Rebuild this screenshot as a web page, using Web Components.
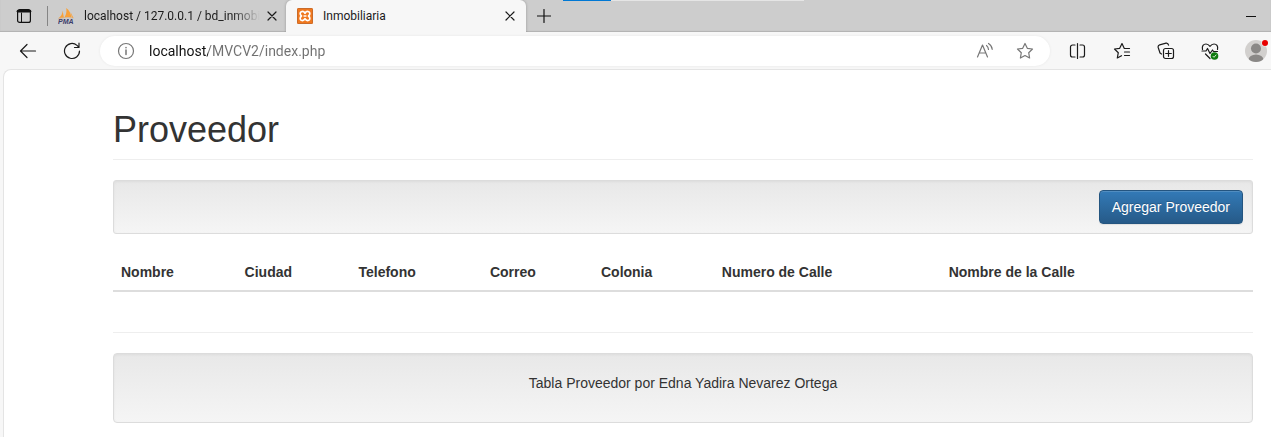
<!DOCTYPE html>
<html lang="es">
<head>
<meta charset="utf-8">
<title>Inmobiliaria</title>
<style>
html, body { margin: 0; height: 100%; }
body { background: #f7f7f7; color: #333; font: 14px/20px "Liberation Sans", Arial, sans-serif; overflow: hidden; }
</style>
</head>
<body>
<browser-window></browser-window>

<script>
const define = (name, html) => {
  const template = document.createElement('template');
  template.innerHTML = html;
  customElements.define(name, class extends HTMLElement {
    constructor() {
      super();
      this.attachShadow({ mode: 'open' }).append(template.content.cloneNode(true));
    }
  });
};

const iconButton = `
  button { appearance: none; border: 0; background: none; padding: 0; margin: 0; color: inherit; display: flex; align-items: center; justify-content: center; flex: none; box-sizing: border-box; }
  button svg { display: block; fill: none; stroke: currentColor; stroke-width: 1.2; stroke-linecap: round; stroke-linejoin: round; }
`;

define('browser-tab', `
<style>
  ${iconButton}
  :host { display: flex; align-items: center; box-sizing: border-box; height: 32px; width: 238px; padding: 0 6px 0 10px; color: #1b1b1b; }
  :host([selected]) { width: 240px; padding: 0 8px 0 11px; background: #f7f7f7; border-radius: 6px 6px 0 0; box-shadow: 0 0 3px #0004; clip-path: inset(0 -4px 0 -4px); }
  .icon { width: 16px; height: 16px; margin-right: 10px; flex: none; }
  .title { flex: 1; min-width: 0; overflow: hidden; white-space: nowrap; font: 12px/20px Roboto, "Open Sans", sans-serif; }
  :host(:not([selected])) .title { mask-image: linear-gradient(to right, #000 calc(100% - 28px), transparent); }
  button { width: 16px; height: 16px; margin-left: 4px; }
</style>
<span class="icon"><slot name="icon"></slot></span>
<span class="title"><slot></slot></span>
<button aria-label="Cerrar pestaña"><svg width="10" height="10"><path d="M1 1l8 8M9 1L1 9"/></svg></button>
`);

define('tab-strip', `
<style>
  ${iconButton}
  :host { display: flex; height: 32px; background: #cdcdcd; color: #111; box-shadow: inset 0 -1px 1px #0002; }
  .menu { width: 47px; height: 32px; }
  .rule { width: 1px; height: 20px; margin-top: 6px; background: #858585; }
  .add { width: 37px; height: 32px; padding-right: 2px; }
  .progress { width: 241px; height: 1px; background: linear-gradient(to right, #0078d4 20%, #e5e5e5 20%); }
  .minimize { margin-left: auto; width: 40px; height: 32px; }
</style>
<button class="menu" aria-label="Acciones de pestaña"><svg width="16" height="16"><rect x="1.6" y="1.6" width="12.8" height="12.8" rx="2"/><path d="M2 3.2h12" stroke-width="2.6"/><path d="M5.500 5v9" stroke-width="1"/></svg></button>
<span class="rule"></span>
<browser-tab>
  <svg slot="icon" width="16" height="16" viewBox="0 0 16 16" style="display:block">
    <path d="M0 10.500C3 9 4.500 6 4.500 2.500L6 10zM6 10C8 7 9 4 8.200 0c3 2 5 6 5.200 10-2-1-5-1-7.400 0zM12.500 4l3 6H14z" fill="#f8a13a"/>
    <path d="M0 10.800c4-1.300 10-1.600 15.500-.6" fill="none" stroke="#c9b9a8" stroke-width=".8"/>
    <text x="0" y="16" font-family="Liberation Sans" font-size="7" font-weight="700" font-style="italic" fill="#3c3c6b">PMA</text>
  </svg>localhost / 127.0.0.1 / bd_inmobiliaria</browser-tab>
<browser-tab selected>
  <svg slot="icon" width="16" height="16" viewBox="0 0 16 16" style="display:block">
    <rect width="16" height="16" rx="1.500" fill="#f0781e"/><rect x=".5" y=".5" width="15" height="15" rx="1" fill="none" stroke="#c96b2a"/>
    <path d="M8 5.300C7 3.500 5.500 3.200 4.300 3.700 2.700 4.500 2.800 6.700 4.500 8 2.800 9.300 2.700 11.500 4.300 12.300 5.500 12.800 7 12.500 8 10.700 9 12.500 10.500 12.800 11.700 12.300 13.300 11.500 13.200 9.300 11.500 8 13.200 6.700 13.300 4.500 11.700 3.700 10.500 3.200 9 3.500 8 5.300zM6.500 8h3" fill="none" stroke="#fff" stroke-width="1.700" stroke-linejoin="round"/>
  </svg>Inmobiliaria</browser-tab>
<button class="add" aria-label="Nueva pestaña"><svg width="14" height="14"><path d="M7 .5v13M.5 7h13"/></svg></button>
<span class="progress"></span>
<button class="minimize" aria-label="Minimizar"><svg width="10" height="10"><path d="M0 5.500h10" stroke-width="1"/></svg></button>
`);

define('address-bar', `
<style>
  ${iconButton}
  :host { --host-width: 59px; display: flex; align-items: center; height: 30px; border-radius: 15px; background: #fff; color: #777; box-shadow: 0 0 3px #0001; }
  button { width: 40px; height: 30px; }
  .info { width: 49px; padding-left: 2px; }
  .star { margin-right: 5px; }
  input { flex: 1; min-width: 0; height: 20px; border: 0; outline: 0; padding: 0; font: 14px/20px Roboto, "Open Sans", sans-serif; -webkit-text-fill-color: transparent; background: linear-gradient(to right, #111 0 var(--host-width), #707070 var(--host-width)) text; }
</style>
<button class="info" aria-label="Información del sitio"><svg width="18" height="18"><circle cx="9" cy="9" r="7.500"/><path d="M9 8v4.500M9 5.400v.3" stroke-width="1.500"/></svg></button>
<input type="text" aria-label="Dirección" value="localhost/MVCV2/index.php">
<button aria-label="Leer en voz alta"><svg width="18" height="18"><path d="M1.500 15L6.500 3l5 12M3.200 11h6.600M10.500 3.500q1.800 1.400 2 4M12.500 1.500q3.400 2 3.700 5.800"/></svg></button>
<button class="star" aria-label="Agregar a favoritos"><svg width="18" height="18"><path d="M9 1.500l2.300 4.800 5.200.7-3.800 3.700.9 5.300L9 13.500 4.400 16l.9-5.300L1.500 7l5.200-.7z"/></svg></button>
`);

define('browser-toolbar', `
<style>
  ${iconButton}
  :host { display: flex; align-items: center; height: 37px; background: #f7f7f7; color: #1b1b1b; padding: 1px 0 0 6px; box-sizing: border-box; }
  button { width: 44px; height: 30px; }
  address-bar { flex: 1; margin: 0 6px; }
  .profile { width: 39px; justify-content: flex-end; }
  .profile svg { stroke: none; }
</style>
<button aria-label="Atrás"><svg width="18" height="18"><path d="M16.500 9H1.500M8 2.500L1.500 9 8 15.500"/></svg></button>
<button aria-label="Actualizar"><svg width="18" height="18"><path d="M16.500 9a7.500 7.500 0 1 1-2.500-5.600l1.700 1.600M16 1.200V5.500h-4.500"/></svg></button>
<address-bar></address-bar>
<button aria-label="Pantalla dividida"><svg width="18" height="18"><path d="M6 3H3.500a2 2 0 0 0-2 2v8a2 2 0 0 0 2 2H6M11 3h2.500a2 2 0 0 1 2 2v8a2 2 0 0 1-2 2H11M8.500 1.500v15"/></svg></button>
<button aria-label="Favoritos"><svg width="18" height="18"><path d="M16.500 6.500h-5.200L9 1.500 6.700 6.300 1.500 7l3.800 3.700L4.300 16 8.500 13.700M11.500 10h5M11.500 13.500h5"/></svg></button>
<button aria-label="Colecciones"><svg width="18" height="18"><rect x="6.500" y="6.500" width="10" height="10" rx="2"/><path d="M11.500 8.700v5.600M8.700 11.500h5.600M4.500 12L3 11 1.200 5.500Q.7 3.500 2.600 2.900L9 1.200q2-.4 2.600 2"/></svg></button>
<button aria-label="Rendimiento del explorador"><svg width="18" height="18"><path d="M1.500 7.500C.7 4 2.500 2 5 2c2 0 3 1 4 2.300C10 3 11 2 13 2c2.500 0 4.300 2 3.500 5.500M1 9h4l1.500-2.500 2.500 5L11.500 8l1 1.500H16.500M4.500 12L9 16.500"/><circle cx="13.500" cy="14" r="3.800" fill="#107c10" stroke="none"/><path d="M12 14.300l1 1 2-2.300" stroke="#fff" stroke-width=".8"/></svg></button>
<button class="profile" aria-label="Perfil"><svg width="26" height="26"><defs><clipPath id="face"><circle cx="11" cy="13" r="11"/></clipPath></defs><g clip-path="url(#face)"><rect width="22" height="26" fill="#d2d0ce"/><circle cx="11" cy="10.500" r="5" fill="#8a8886"/><ellipse cx="11" cy="22" rx="7.500" ry="5.500" fill="#8a8886"/></g><circle cx="20" cy="5" r="3.500" fill="#f7f7f7"/><circle cx="20" cy="5" r="3" fill="#e80000"/></svg></button>
`);

define('well-box', `
<style>
  :host { display: block; border: 1px solid #dcdcdc; border-radius: 3px; background: linear-gradient(#e8e8e8, #f5f5f5); box-shadow: inset 0 1px 3px #0000000d; padding: 9px; }
  :host([large]) { padding: 19px 19px 29px; border-radius: 4px; text-align: center; }
  :host([actions]) { display: flex; justify-content: flex-end; }
</style>
<slot></slot>
`);

define('primary-button', `
<style>
  :host { display: block; }
  button { display: block; appearance: none; margin: 0; padding: 6px 12px; border: 1px solid #245580; border-radius: 4px; background: linear-gradient(#337ab7, #265a88); box-shadow: inset 0 1px 0 #ffffff26, 0 1px 1px #00000013; color: #fff; font: inherit; text-shadow: 0 -1px 0 #0003; }
</style>
<button type="button"><slot></slot></button>
`);

define('supplier-table', `
<style>
  :host { display: block; }
  table { width: 100%; border-collapse: collapse; }
  th { padding: 8px; text-align: left; border-bottom: 2px solid #ddd; height: 20px; }
</style>
<table>
  <thead><tr><th>Nombre</th><th>Ciudad</th><th>Telefono</th><th>Correo</th><th>Colonia</th><th>Numero de Calle</th><th>Nombre de la Calle</th><th></th><th></th></tr></thead>
  <tbody></tbody>
</table>
`);

define('supplier-page', `
<style>
  :host { display: block; background: #fff; border: 1px solid #e4e4e4; border-width: 1px 0 0 1px; border-radius: 8px 0 0 0; padding: 40px 18px 14px 109px; }
  h1 { margin: 0 0 20px; padding-bottom: 9px; border-bottom: 1px solid #eee; font: 500 36px/40px "Liberation Sans", Arial, sans-serif; }
  supplier-table { margin: 20px 0 40px; }
  hr { margin: 0 0 20px; border: 0; border-top: 1px solid #eee; }
  p { margin: 0; }
</style>
<h1>Proveedor</h1>
<well-box actions><primary-button>Agregar Proveedor</primary-button></well-box>
<supplier-table></supplier-table>
<hr>
<well-box large><p>Tabla Proveedor por Edna Yadira Nevarez Ortega</p></well-box>
`);

define('browser-window', `
<style>
  :host { display: flex; flex-direction: column; min-height: 100vh; }
  supplier-page { flex: 1; margin-left: 3px; }
</style>
<tab-strip></tab-strip>
<browser-toolbar></browser-toolbar>
<supplier-page></supplier-page>
`);
</script>
</body>
</html>
